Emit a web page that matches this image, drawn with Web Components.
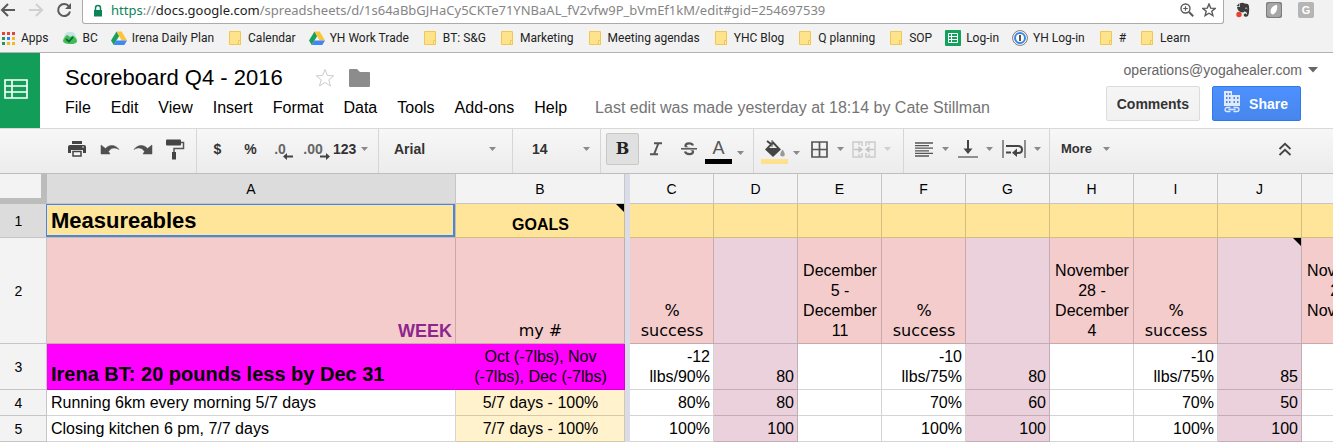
<!DOCTYPE html>
<html lang="en">
<head>
<meta charset="utf-8">
<title>Scoreboard Q4 - 2016</title>
<style>
  html, body { margin: 0; height: 100%; }
  body { background: #fff; color: #000; font-family: "Liberation Sans", Arial, sans-serif; overflow: hidden; }
</style>
</head>
<body>
<sheet-app></sheet-app>

<script>
const ICONS = {
  back: [16, 16, '<path d="M2 8h13M8 2L2 8l6 6" fill="none" stroke="#5a5a5a" stroke-width="2"/>'],
  forward: [16, 16, '<path d="M1 8h13M8 2l6 6-6 6" fill="none" stroke="#d0d0d0" stroke-width="2"/>'],
  reload: [16, 16, '<path d="M13 4.5A6 6 0 1 0 14 9.500" fill="none" stroke="#5a5a5a" stroke-width="2"/><path d="M15 1v6H9z" fill="#5a5a5a"/>'],
  lock: [10, 13, '<path d="M1 6h8v6.500H1z" fill="#0b8457"/><path d="M2.500 6V4a2.500 2.500 0 0 1 5 0v2" fill="none" stroke="#0b8457" stroke-width="1.500"/>'],
  zoomin: [14, 14, '<circle cx="5.500" cy="5.500" r="4.500" fill="none" stroke="#5a5a5a" stroke-width="1.400"/><path d="M9 9l4.200 4.200" stroke="#5a5a5a" stroke-width="2"/><path d="M3.200 5.500h4.600M5.500 3.200v4.600" stroke="#5a5a5a" stroke-width="1.200"/>'],
  urlstar: [14, 14, '<path d="M7 1l1.700 4.100 4.500.3-3.400 2.900 1.100 4.300L7 10.200l-3.900 2.400 1.100-4.300L.8 5.400l4.500-.3z" fill="none" stroke="#5a5a5a" stroke-width="1.400"/>'],
  elephant: [14, 16, '<path d="M4 1.200Q7 .3 8.500 1.500L12 2q1.200 1 1.200 5t-1 6.500q-.8 1.500-3 1.300-1.700-.3-1.500-2 .3-1.500 2.300-1.300l.6 1.200q.8-.8.2-2-1-1.200-2.500-1.200-1 1.500-3.800.5Q1.500 9 1 4.800h3z" fill="#3c3c3c"/><path d="M3.400 1v3H.6z" fill="#3c3c3c"/><path d="M9.300 6.300q1-.8 2 .5" stroke="#ddd" fill="none"/><circle cx="3" cy="12.500" r="2.700" fill="#e8432e"/>'],
  leafbox: [16, 16, '<rect width="16" height="16" rx="2" fill="#7d7d7d"/><rect x="1" y="1" width="14" height="14" rx="3" fill="#a6a6a6"/><path d="M11 3c.8 4-.5 8-4 9.500C3.500 12 4 7 7 4.500 8.500 3.200 10 3 11 3z" fill="#fff"/>'],
  apps: [16, 16, '<g><path fill="#e44436" d="M2 2h3v3H2zM7 2h3v3H7zM12 2h3v3h-3z"/><path fill="#229955" d="M2 7h3v3H2z"/><path fill="#397df0" d="M7 7h3v3H7z"/><path fill="#f0b929" d="M12 7h3v3h-3zM7 12h3v3H7zM12 12h3v3h-3z"/><path fill="#229955" d="M2 12h3v3H2z"/></g>'],
  camp: [16, 16, '<path d="M3 4c2-3 8-3 10 0l2 5c1 2 0 4-2 4.500H3C1 13 0 11 1 9z" fill="#c3e6de"/><path d="M1 11c1-3 2.500-5.500 4.500-6L8 7l3-1.500C13 7 15 9 15 11.500c-1 2-3 2.500-7 2.500s-6.500-1-7-3z" fill="#3fbd52"/><path d="M4 9l3 2.500 4-4.500" fill="none" stroke="#17603f" stroke-width="1.800"/>'],
  drive: [16, 16, '<path d="M5.500 1.500L0 10.500l2.700 4.500L8.200 6z" fill="#1b9f5d"/><path d="M5.500 1.500h5.200l5.300 9h-5.400z" fill="#f8c739"/><path d="M5.400 10.500H16L13.300 15H2.700z" fill="#4285f4"/>'],
  folder: [16, 16, '<path d="M2.500 1.500h11v13h-11z" fill="#ffe38c" stroke="#f1c84f"/><path d="M11.500 10.500h2v4h-2z" fill="#ffe9a8" stroke="#f1c84f"/>'],
  sheets: [16, 16, '<rect width="16" height="16" rx="1" fill="#12a05c"/><path d="M3.500 3.500h9v9h-9zM3.500 6.500h9M3.500 9.500h9M6.500 3.500v9" fill="none" stroke="#fff"/>'],
  onepass: [16, 16, '<circle cx="8" cy="8" r="7.400" fill="#fff" stroke="#777"/><circle cx="8" cy="8" r="5" fill="none" stroke="#3b86e0" stroke-width="2"/><rect x="7" y="5" width="2" height="6" fill="#555"/>'],
  logo: [24, 20, '<path d="M1 1h22v18H1zM1 7h22M1 13h22M8 1v18" fill="none" stroke="#fff" stroke-width="1.600"/>'],
  star: [20, 20, '<path d="M10 1.500l2.400 6 6.400.300-5 4 1.700 6.200L10 14.500 4.500 18l1.700-6.200-5-4 6.400-.300z" fill="none" stroke="#ccc"/>'],
  bigfolder: [21, 18, '<path d="M1 0h7l3 3h9q1 0 1 1v13q0 1-1 1H1q-1 0-1-1V1q0-1 1-1z" fill="#8c8c8c"/>'],
  down: [7, 4, '<path d="M0 0h7L3.500 4z" fill="#8a8a8a"/>'],
  downoff: [7, 4, '<path d="M0 0h7L3.500 4z" fill="#d0d0d0"/>'],
  downbig: [10, 6, '<path d="M0 0h10L5 5.500z" fill="#666"/>'],
  building: [16, 22, '<path d="M0 0h8v4h8v11H0z" fill="#dfeaff"/><path d="M2 2h1.500v2H2zM5 2h1.500v2H5zM2 6h1.500v2H2zM5 6h1.500v2H5zM2 10h1.500v2H2zM5 10h1.500v2H5zM9.500 6H11v2H9.500zM13 6h1.500v2H13zM9.500 10H11v2H9.500zM13 10h1.500v2H13z" fill="#4787ed"/><path d="M6.500 16.500H3a2 2 0 0 0 0 4h3.500M9.500 16.500H13a2 2 0 0 1 0 4H9.500M4.500 18.500h7" fill="none" stroke="#dfeaff" stroke-width="1.300"/>'],
  print: [18, 16, '<path d="M4 0h10v3H4z" fill="#444"/><path d="M2 4h14q2 0 2 2v6h-3V9H3v3H0V6q0-2 2-2z" fill="#444"/><path d="M5 10.500h8V15H5z" fill="#f7f7f7" stroke="#444" stroke-width="1.500"/><path d="M14 6h2" stroke="#ddd" stroke-width="1.200"/>'],
  undo: [20, 12, '<path d="M5.500 5.500C9 1.500 15 1 19 6.500 15 4 11 4.500 8.500 8.500L10 11H1V2z" fill="#4f4f4f" stroke="#4f4f4f" stroke-width=".5"/>'],
  redo: [20, 12, '<path d="M14.500 5.500C11 1.500 5 1 1 6.500 5 4 9 4.500 11.500 8.500L10 11h9V2z" fill="#4f4f4f" stroke="#4f4f4f" stroke-width=".5"/>'],
  roller: [19, 21, '<path d="M1 .5h13q1 0 1 1v4q0 1-1 1H1q-1 0-1-1v-4q0-1 1-1z" fill="#444"/><path d="M15 3.500h2.500v6H8V13" fill="none" stroke="#555" stroke-width="1.500"/><path d="M6 13h4v7.500H6z" fill="#444"/>'],
  arrowl: [10, 7, '<path d="M0 3.500L4 0v2.500h6v2H4V7z" fill="#444"/>'],
  arrowr: [10, 7, '<path d="M10 3.500L6 0v2.500H0v2h6V7z" fill="#444"/>'],
  italic: [14, 14, '<path d="M5 1.200h8M1 12.200h8M9.500 1L5 12.500" fill="none" stroke="#555" stroke-width="2"/>'],
  strike: [16, 14, '<path d="M12 3.500C11 .5 4.500.5 4.500 3.800c0 3.200 7.500 2.200 7.500 5.700 0 3.500-7 3.500-8 0" fill="none" stroke="#555" stroke-width="2.200"/><path d="M0 6.800h16" stroke="#eee" stroke-width="3"/><path d="M0 6.800h16" stroke="#555" stroke-width="1.500"/>'],
  bucket: [22, 18, '<path d="M3 1l4 3" stroke="#444" stroke-width="2"/><path d="M9 1l8 8.500-8 7.500-8-7.500z" fill="#444"/><path d="M9 4l4 4H5z" fill="#eee"/><path d="M8 0v7" stroke="#555"/><path d="M18.500 9.500c3 4 3 7 0 7s-3-3 0-7z" fill="#999"/>'],
  borders: [17, 17, '<path d="M1 1h15v15H1zM8.500 1v15M1 8.500h15" fill="none" stroke="#555" stroke-width="1.700"/>'],
  merge: [24, 17, '<path d="M10 5V1H1v15h9v-4M14 5V1h9v15h-9v-4M7 1v3M17 1v3M7 16v-3M17 16v-3" fill="none" stroke="#ccc" stroke-width="1.500"/><path d="M2 8.500h6M22 8.500h-6" stroke="#c4c4c4" stroke-width="1.500"/><path d="M6.500 5L11 8.500 6.500 12zM17.500 5L13 8.500l4.500 3.500z" fill="#c4c4c4"/>'],
  align: [18, 15, '<path d="M0 1h18M0 3.600h14M0 6.200h18M0 8.800h14M0 11.400h18M0 14h14" stroke="#555" stroke-width="1.300"/>'],
  valign: [20, 18, '<path d="M0 17h20" stroke="#777" stroke-width="1.600"/><path d="M10 0v10" stroke="#444" stroke-width="2"/><path d="M5.500 8.500h9L10 14z" fill="#444"/>'],
  wrap: [24, 18, '<path d="M1 0v18M23 0v18" stroke="#777" stroke-width="1.600"/><path d="M4 6h12q4 0 4 3.500T16 13h-2M4 12.500h5" fill="none" stroke="#444" stroke-width="2"/><path d="M10 12.700l5-4.200v8.400z" fill="#444"/>'],
  collapse: [14, 14, '<path d="M1.500 7L7 1.800 12.500 7M1.500 13L7 7.800 12.500 13" fill="none" stroke="#444" stroke-width="1.800"/>']
};

function define(name, html, setup) {
  const template = document.createElement("template");
  template.innerHTML = html;
  customElements.define(name, class extends HTMLElement {
    constructor() {
      super();
      this.attachShadow({ mode: "open" }).append(template.content.cloneNode(true));
    }
    connectedCallback() { if (setup) setup(this, this.shadowRoot); }
  });
}

define("ui-icon", `<style>:host{display:inline-block;flex:none;line-height:0}svg{display:block}</style>`, (el, root) => {
  const [w, h, body] = ICONS[el.getAttribute("name")];
  root.innerHTML += `<svg width="${w}" height="${h}" viewBox="0 0 ${w} ${h}" aria-hidden="true">${body}</svg>`;
});

define("address-bar", `
<style>
  :host { display: flex; height: 24px; background: #f2f2f2; }
  nav, .ext { display: flex; align-items: center; padding-bottom: 4px; }
  nav { gap: 12px; width: 82px; box-sizing: border-box; }
  button { border: 0; padding: 0; background: none; display: flex; }
  .box { flex: 1; display: flex; align-items: center; box-sizing: border-box; min-width: 0;
         background: #fff; border: 1px solid #ababab; border-top: 0; border-radius: 0 0 3px 3px;
         padding: 0 7px 3px 10px; }
  .url { flex: 1; margin-left: 8px; white-space: nowrap; overflow: hidden; outline: 0;
         font: 13px/20px "Noto Sans", sans-serif; color: #858585; }
  .s { color: #0b8457; } .d { color: #222; }
  .tools { display: flex; gap: 8px; }
  .ext { gap: 16px; padding-left: 12px; padding-right: 19px; }
  .g { background: #b5b5b5; color: #fff; font: bold 11px/16px "Liberation Sans", sans-serif; width: 16px; justify-content: center; border-radius: 2px; }
</style>
<nav>
  <button aria-label="Back"><ui-icon name="back"></ui-icon></button>
  <button aria-label="Forward"><ui-icon name="forward"></ui-icon></button>
  <button aria-label="Reload"><ui-icon name="reload"></ui-icon></button>
</nav>
<div class="box">
  <ui-icon name="lock"></ui-icon>
  <div class="url" role="textbox" aria-label="Address" contenteditable="true" spellcheck="false"><span class="s">https</span>://<span class="d">docs.google.com</span>/spreadsheets/d/1s64aBbGJHaCy5CKTe71YNBaAL_fV2vfw9P_bVmEf1kM/edit#gid=254697539</div>
  <div class="tools">
    <button aria-label="Zoom"><ui-icon name="zoomin"></ui-icon></button>
    <button aria-label="Bookmark"><ui-icon name="urlstar"></ui-icon></button>
  </div>
</div>
<div class="ext">
  <button aria-label="Clipper"><ui-icon name="elephant"></ui-icon></button>
  <button aria-label="Extension"><ui-icon name="leafbox"></ui-icon></button>
  <button class="g">G</button>
</div>`);

define("bookmark-link", `
<style>
  :host { display: block; flex: none; }
  a { display: flex; align-items: center; gap: 5px; color: #222; text-decoration: none; font: 12px/16px Roboto, sans-serif; white-space: nowrap; }
</style>
<a href="#"><slot></slot></a>`, (el, root) => {
  const icon = document.createElement("ui-icon");
  icon.setAttribute("name", el.getAttribute("icon"));
  root.querySelector("a").prepend(icon);
});

define("bookmark-bar", `
<style>:host { display: flex; align-items: center; gap: 13px; height: 28px; background: #f2f2f2; border-bottom: 1px solid #b3b3b3; }</style>
<bookmark-link icon="apps">Apps</bookmark-link>
<bookmark-link icon="camp">BC</bookmark-link>
<bookmark-link icon="drive">Irena Daily Plan</bookmark-link>
<bookmark-link icon="folder">Calendar</bookmark-link>
<bookmark-link icon="drive">YH Work Trade</bookmark-link>
<bookmark-link icon="folder">BT: S&amp;G</bookmark-link>
<bookmark-link icon="folder">Marketing</bookmark-link>
<bookmark-link icon="folder">Meeting agendas</bookmark-link>
<bookmark-link icon="folder">YHC Blog</bookmark-link>
<bookmark-link icon="folder">Q planning</bookmark-link>
<bookmark-link icon="folder">SOP</bookmark-link>
<bookmark-link icon="sheets">Log-in</bookmark-link>
<bookmark-link icon="onepass">YH Log-in</bookmark-link>
<bookmark-link icon="folder">#</bookmark-link>
<bookmark-link icon="folder">Learn</bookmark-link>`);

define("doc-header", `
<style>
  :host { display: flex; background: #fff; border-bottom: 1px solid #d9d9d9; }
  .logo { width: 40px; background: #129e58; display: flex; align-items: center; padding-left: 4px; box-sizing: border-box; padding-bottom: 3px; }
  .main { flex: 1; padding: 12px 0 10px 25px; min-width: 0; }
  .title { display: flex; align-items: center; }
  h1 { margin: 0 32px 0 0; font: 22px/26px "Liberation Sans", sans-serif; }
  button { font-family: inherit; border: 0; padding: 0; background: none; color: inherit; display: flex; align-items: center; white-space: nowrap; }
  .star { margin-right: 14px; }
  .menu { display: flex; gap: 20px; margin-top: 7px; font-size: 16px; line-height: 20px; white-space: nowrap; }
  .menu button { font-size: 16px; line-height: 20px; }
  .menu span { color: #757575; margin-left: 8px; }
  .side { padding: 9px 15px 7px 0; display: flex; flex-direction: column; align-items: flex-end; gap: 8px; }
  .user { font-size: 14px; line-height: 16px; color: #666; gap: 6px; }
  .actions { display: flex; gap: 12px; padding-right: 17px; }
  .actions button { height: 35px; box-sizing: border-box; border-radius: 2px; font-size: 14px; font-weight: bold; justify-content: center; }
  .comments { padding: 0 10px; border: 1px solid #dcdcdc; background: linear-gradient(#f5f5f5, #f1f1f1); color: #333; }
  .share { padding: 0 12px 0 11px; gap: 9px; border: 1px solid #3079ed; background: linear-gradient(#4d90fe, #4787ed); color: #fff; }
  .share ui-icon { padding-bottom: 3px; }
</style>
<div class="logo"><ui-icon name="logo"></ui-icon></div>
<div class="main">
  <div class="title">
    <h1>Scoreboard Q4 - 2016</h1>
    <button class="star" aria-label="Star"><ui-icon name="star"></ui-icon></button>
    <button aria-label="Move to folder"><ui-icon name="bigfolder"></ui-icon></button>
  </div>
  <div class="menu">
    <button>File</button><button>Edit</button><button>View</button><button>Insert</button><button>Format</button><button>Data</button><button>Tools</button><button>Add-ons</button><button>Help</button>
    <span>Last edit was made yesterday at 18:14 by Cate Stillman</span>
  </div>
</div>
<div class="side">
  <button class="user">operations@yogahealer.com <ui-icon name="downbig"></ui-icon></button>
  <div class="actions">
    <button class="comments">Comments</button>
    <button class="share"><ui-icon name="building"></ui-icon>Share</button>
  </div>
</div>`);

define("tool-group", `
<style>
  :host { display: flex; align-items: center; box-sizing: border-box; flex: none; border-right: 1px solid #d6d6d6; height: 44px; padding-bottom: 4px; }
  :host(.last) { border-right: 0; flex: 1; }
</style><slot></slot>`);

define("sheet-toolbar", `
<style>
  :host { display: flex; background: linear-gradient(#f7f7f7, #ececec); border-bottom: 1px solid #bdbdbd; color: #333; }
  button, select { font: bold 14px/20px "Liberation Sans", sans-serif; color: #333; border: 0; padding: 0; margin: 0; background: none; }
  button { display: flex; align-items: center; justify-content: center; flex: none; }
  .b { width: 33px; height: 32px; }
  .on { background: #e0e0e0; border: 1px solid #c8c8c8; border-radius: 2px; box-sizing: border-box; font-family: "DejaVu Serif", serif; font-size: 16px; color: #222; }
  .dec span { display: grid; color: #666; line-height: 14px; padding: 4px 7px 0 0; }
  .dec ui-icon { margin: -3px -7px 0 0; justify-self: end; }
  .drop { gap: 9px; height: 32px; }
  .g1 { padding-left: 60px; width: 197px; }
  .g2 { padding-left: 4px; width: 182px; }
  .g3 { padding-left: 15px; width: 134px; }
  .g4 { padding-left: 19px; width: 88px; }
  .g5 { padding-left: 5px; width: 153px; }
  .g6 { padding-left: 7px; width: 150px; }
  .g7 { padding-left: 11px; width: 146px; gap: 9px; }
  .g8 { padding-left: 11px; padding-right: 41px; justify-content: space-between; }
  .num { gap: 5px; }
  .more { font-size: 13px; gap: 11px; }
  label { display: grid; align-items: center; justify-items: end; flex: 1; }
  label > * { grid-area: 1 / 1; }
  select { appearance: none; width: 100%; outline: 0; }
  label ui-icon { pointer-events: none; margin-right: 16px; }
  .g4 label ui-icon { margin-right: 10px; }
  .colour { display: grid; justify-items: center; align-content: end; row-gap: 1px; width: 27px; height: 30px; color: #555; font-weight: normal; font-size: 18px; line-height: 19px; }
  .colour i { width: 27px; height: 5px; background: #000; }
  .colour i.y { background: #ffe08c; }
  .pick { display: flex; align-items: center; gap: 5px; }
  .pick > ui-icon { margin-top: 8px; }
  .borders { margin: 0 8px 0 11px; }
  .tight { gap: 8px; }
</style>
<tool-group class="g1">
  <button class="b" aria-label="Print"><ui-icon name="print"></ui-icon></button>
  <button class="b" aria-label="Undo"><ui-icon name="undo"></ui-icon></button>
  <button class="b" aria-label="Redo"><ui-icon name="redo"></ui-icon></button>
  <button class="b" aria-label="Paint format"><ui-icon name="roller"></ui-icon></button>
</tool-group>
<tool-group class="g2">
  <button class="b">$</button><button class="b">%</button>
  <button class="b dec"><span>.0<ui-icon name="arrowl"></ui-icon></span></button>
  <button class="b dec"><span>.00<ui-icon name="arrowr"></ui-icon></span></button>
  <button class="drop num">123<ui-icon name="down"></ui-icon></button>
</tool-group>
<tool-group class="g3"><label><select aria-label="Font"><option>Arial</option></select><ui-icon name="down"></ui-icon></label></tool-group>
<tool-group class="g4"><label><select aria-label="Font size"><option>14</option></select><ui-icon name="down"></ui-icon></label></tool-group>
<tool-group class="g5">
  <button class="b on">B</button>
  <button class="b" aria-label="Italic"><ui-icon name="italic"></ui-icon></button>
  <button class="b" aria-label="Strikethrough"><ui-icon name="strike"></ui-icon></button>
  <div class="pick"><button class="colour">A<i></i></button><ui-icon name="down"></ui-icon></div>
</tool-group>
<tool-group class="g6">
  <div class="pick"><button class="colour" aria-label="Fill colour"><ui-icon name="bucket"></ui-icon><i class="y"></i></button><ui-icon name="down"></ui-icon></div>
  <button class="drop borders" aria-label="Borders"><ui-icon name="borders"></ui-icon><ui-icon name="down"></ui-icon></button>
  <button class="drop tight" aria-label="Merge cells"><ui-icon name="merge"></ui-icon><ui-icon name="downoff"></ui-icon></button>
</tool-group>
<tool-group class="g7">
  <button class="drop" aria-label="Horizontal align"><ui-icon name="align"></ui-icon><ui-icon name="down"></ui-icon></button>
  <button class="drop tight" aria-label="Vertical align"><ui-icon name="valign"></ui-icon><ui-icon name="down"></ui-icon></button>
  <button class="drop tight" aria-label="Wrap text"><ui-icon name="wrap"></ui-icon><ui-icon name="down"></ui-icon></button>
</tool-group>
<tool-group class="g8 last">
  <button class="drop more">More<ui-icon name="down"></ui-icon></button>
  <button aria-label="Hide menus"><ui-icon name="collapse"></ui-icon></button>
</tool-group>`);

define("score-grid", `
<style>
  :host { display: block; overflow: hidden; background: #fff; }
  table { table-layout: fixed; border-collapse: separate; border-spacing: 0; width: 1386px; font-size: 16px; line-height: 20px; }
  .h { width: 47px; } .a { width: 409px; } .b { width: 169px; } .f { width: 5px; } .c { width: 84px; }
  th, td { box-sizing: border-box; border: solid rgba(0,0,0,.17); border-width: 0 1px 1px 0; padding: 3px 3px 2px 4px; vertical-align: bottom; text-align: right; position: relative; }
  th { background: #f3f3f3; border-color: #c6c6c6; font-weight: normal; font-size: 14px; vertical-align: middle; text-align: center; }
  thead th { padding: 5px 0 4px; }
  tbody th { padding: 3px 9px 2px 0; }
  th.sel { background: #dcdcdc; }
  thead th.corner { border-right: 6px solid #bcbcbc; border-bottom: 6px solid #bcbcbc; padding: 0; }
  tr > .bar { background: #dadde9; border: 0; padding: 0; }
  .l { text-align: left; } .m { text-align: center; }
  .y { background: #ffe599; } .p { background: #f4cccc; } .v { background: #ead1dc; } .mg { background: #f0f; } .ly { background: #fff2cc; }
  .big { font-size: 22px; line-height: 28px; font-weight: bold; }
  .bt { font-size: 20px; line-height: 26px; font-weight: bold; border-right-color: transparent; }
  .week { font-size: 18px; font-weight: bold; color: #8e258e; }
  .goals { font-weight: bold; }
  .dj { font-family: "DejaVu Sans", sans-serif; }
  .dates td { height: 106px; }
  .active::after { content: ""; position: absolute; inset: 0 0 0 -1px; border: solid #4285f4; border-width: 1px 2px 2px 1px; }
  .note::before { content: ""; position: absolute; top: 0; right: 0; border: 4px solid; border-color: #000 #000 transparent transparent; }
</style>
<table>
  <colgroup><col class="h"><col class="a"><col class="b"><col class="f"><col class="c"><col class="c"><col class="c"><col class="c"><col class="c"><col class="c"><col class="c"><col class="c"><col class="c"></colgroup>
  <thead><tr><th class="corner"></th><th class="sel">A</th><th>B</th><th class="bar"></th><th>C</th><th>D</th><th>E</th><th>F</th><th>G</th><th>H</th><th>I</th><th>J</th><th></th></tr></thead>
  <tbody>
    <tr><th class="sel">1</th><td class="y l big active">Measureables</td><td class="y m goals note">GOALS</td><td class="bar"></td><td class="y"></td><td class="y"></td><td class="y"></td><td class="y"></td><td class="y"></td><td class="y"></td><td class="y"></td><td class="y"></td><td class="y"></td></tr>
    <tr class="dates"><th>2</th><td class="p week">WEEK</td><td class="p m dj">my #</td><td class="bar"></td><td class="p m dj">% success</td><td class="v"></td><td class="p m">December 5 - December 11</td><td class="p m dj">% success</td><td class="v"></td><td class="p m">November 28 - December 4</td><td class="p m dj">% success</td><td class="v note"></td><td class="p m">November 21 - November 27</td></tr>
    <tr><th>3</th><td class="mg l bt">Irena BT: 20 pounds less by Dec 31</td><td class="mg m">Oct (-7lbs), Nov<br>(-7lbs), Dec (-7lbs)</td><td class="bar"></td><td>-12<br>llbs/90%</td><td class="v">80</td><td></td><td>-10<br>llbs/75%</td><td class="v">80</td><td></td><td>-10<br>llbs/75%</td><td class="v">85</td><td></td></tr>
    <tr><th>4</th><td class="l">Running 6km every morning 5/7 days</td><td class="ly m">5/7 days - 100%</td><td class="bar"></td><td>80%</td><td class="v">80</td><td></td><td>70%</td><td class="v">60</td><td></td><td>70%</td><td class="v">50</td><td></td></tr>
    <tr><th>5</th><td class="l">Closing kitchen 6 pm, 7/7 days</td><td class="ly m">7/7 days - 100%</td><td class="bar"></td><td>100%</td><td class="v">100</td><td></td><td>100%</td><td class="v">100</td><td></td><td>100%</td><td class="v">100</td><td></td></tr>
  </tbody>
</table>`);

define("sheet-app", `
<style>:host { display: block; }</style>
<address-bar></address-bar>
<bookmark-bar></bookmark-bar>
<doc-header></doc-header>
<sheet-toolbar></sheet-toolbar>
<score-grid></score-grid>`);
</script>
</body>
</html>
